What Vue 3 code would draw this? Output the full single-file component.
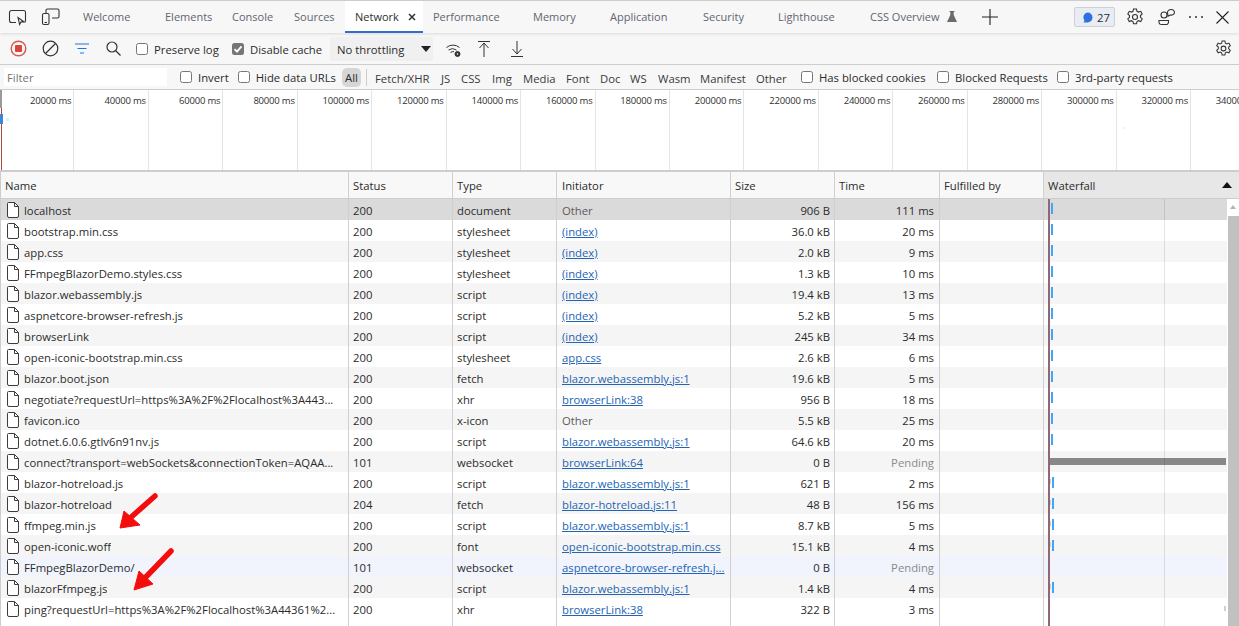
<script setup>
const tabs = [
  { name: 'Welcome', w: 82 }, { name: 'Elements', w: 67 }, { name: 'Console', w: 62 },
  { name: 'Sources', w: 61 }, { name: 'Network', w: 78, active: true }, { name: 'Performance', w: 100 },
  { name: 'Memory', w: 77 }, { name: 'Application', w: 93 }, { name: 'Security', w: 75 },
  { name: 'Lighthouse', w: 92 }, { name: 'CSS Overview', w: 85, flask: true },
]
const types = [
  { name: 'Fetch/XHR', w: 66 }, { name: 'JS', w: 20 }, { name: 'CSS', w: 31 }, { name: 'Img', w: 31 },
  { name: 'Media', w: 43 }, { name: 'Font', w: 34 }, { name: 'Doc', w: 30 }, { name: 'WS', w: 28 },
  { name: 'Wasm', w: 42 }, { name: 'Manifest', w: 56 }, { name: 'Other', w: 45 },
]
const ticks = Array.from({ length: 17 }, (_, i) => `${(i + 1) * 20000} ms`)
const rows = [
  ['localhost', '200', 'document', 'Other', '906 B', '111 ms', 'a'],
  ['bootstrap.min.css', '200', 'stylesheet', '(index)', '36.0 kB', '20 ms', 'a'],
  ['app.css', '200', 'stylesheet', '(index)', '2.0 kB', '9 ms', 'a'],
  ['FFmpegBlazorDemo.styles.css', '200', 'stylesheet', '(index)', '1.3 kB', '10 ms', 'a'],
  ['blazor.webassembly.js', '200', 'script', '(index)', '19.4 kB', '13 ms', 'a'],
  ['aspnetcore-browser-refresh.js', '200', 'script', '(index)', '5.2 kB', '5 ms', 'a'],
  ['browserLink', '200', 'script', '(index)', '245 kB', '34 ms', 'a'],
  ['open-iconic-bootstrap.min.css', '200', 'stylesheet', 'app.css', '2.6 kB', '6 ms', 'a'],
  ['blazor.boot.json', '200', 'fetch', 'blazor.webassembly.js:1', '19.6 kB', '5 ms', 'a'],
  ['negotiate?requestUrl=https%3A%2F%2Flocalhost%3A443...', '200', 'xhr', 'browserLink:38', '956 B', '18 ms', 'a'],
  ['favicon.ico', '200', 'x-icon', 'Other', '5.5 kB', '25 ms', 'a'],
  ['dotnet.6.0.6.gtlv6n91nv.js', '200', 'script', 'blazor.webassembly.js:1', '64.6 kB', '20 ms', 'a'],
  ['connect?transport=webSockets&connectionToken=AQAA...', '101', 'websocket', 'browserLink:64', '0 B', 'Pending', 'long'],
  ['blazor-hotreload.js', '200', 'script', 'blazor.webassembly.js:1', '621 B', '2 ms', 'b'],
  ['blazor-hotreload', '204', 'fetch', 'blazor-hotreload.js:11', '48 B', '156 ms', 'b'],
  ['ffmpeg.min.js', '200', 'script', 'blazor.webassembly.js:1', '8.7 kB', '5 ms', 'b'],
  ['open-iconic.woff', '200', 'font', 'open-iconic-bootstrap.min.css', '15.1 kB', '4 ms', 'b'],
  ['FFmpegBlazorDemo/', '101', 'websocket', 'aspnetcore-browser-refresh.j...', '0 B', 'Pending', ''],
  ['blazorFfmpeg.js', '200', 'script', 'blazor.webassembly.js:1', '1.4 kB', '4 ms', 'b'],
  ['ping?requestUrl=https%3A%2F%2Flocalhost%3A44361%2...', '200', 'xhr', 'browserLink:38', '322 B', '3 ms', 'end'],
].map(([name, status, type, initiator, size, time, bar]) => ({ name, status, type, initiator, size, time, bar }))
const rowClass = (i) => ({ sel: i === 0, ws: i === 17, alt: i % 2 === 0 && i !== 0 && i !== 17 })
</script>

<template>
  <div class="devtools">
    <div class="tabbar">
      <svg class="ic first" width="20" height="18" viewBox="0 0 20 18" fill="none" stroke="#333" stroke-width="1.1">
        <path d="M8 14.500H3.500a2 2 0 0 1-2-2v-8a2 2 0 0 1 2-2h12a2 2 0 0 1 2 2v8a2 2 0 0 1-.6 1.400" />
        <path d="M10 9.500l1.600 7 1.500-2.600 3 .1z" />
      </svg>
      <svg class="ic second" width="20" height="18" viewBox="0 0 20 18" fill="none" stroke="#333" stroke-width="1.1">
        <path d="M5 5V2.500a1.500 1.500 0 0 1 1.500-1.500h10a1.500 1.500 0 0 1 1.500 1.500v6a1.500 1.500 0 0 1-1.500 1.500H11" />
        <rect x="1.500" y="5.500" width="6.500" height="11" rx="1.500" />
        <path d="M3.500 14.500h2.500" />
      </svg>
      <div class="tabs">
        <div v-for="t in tabs" :key="t.name" class="tab" :class="{ active: t.active }" :style="{ width: t.w + 'px' }">
          {{ t.name }}
          <svg v-if="t.flask" class="flask" width="10" height="11" viewBox="0 0 10 11"><path fill="#6b6b6b" d="M2.500 0h5v1H6.700v3L10 11H0l3.300-7V1H2.500z" /></svg>
          <svg v-if="t.active" class="tabx" width="8" height="8" viewBox="0 0 8 8"><path d="M1 1l6 6M7 1L1 7" stroke="#333" stroke-width="1.500" /></svg>
        </div>
      </div>
      <svg class="plus" width="16" height="16" viewBox="0 0 16 16"><path d="M8 0v16M0 8h16" stroke="#222" stroke-width="1.100" /></svg>
      <div class="badge">
        <svg width="11" height="11" viewBox="0 0 11 11"><path fill="#2f6fe0" d="M5.500.500a5 5 0 0 1 5 5 5 5 0 0 1-5 5H1.500l1-1.800A5 5 0 0 1 5.500.500z" /></svg>
        <span>27</span>
      </div>
      <svg class="ic gear1" width="18" height="18" viewBox="0 0 18 18" fill="none" stroke="#333" stroke-width="1.100">
        <circle cx="9" cy="9" r="2.500" />
        <path d="M7.500 1h3l.5 2.300 1.500.8 2.200-.8 1.500 2.600-1.700 1.600v1.800l1.700 1.600-1.500 2.600-2.200-.8-1.500.8-.5 2.300h-3l-.5-2.300-1.500-.8-2.200.8-1.500-2.600 1.700-1.600V7.500L1.800 5.900l1.500-2.600 2.200.8L7 3.300z" />
      </svg>
      <svg class="ic people" width="18" height="18" viewBox="0 0 18 18" fill="none" stroke="#333" stroke-width="1.100">
        <circle cx="6" cy="7" r="3" />
        <path d="M1 12.500h9.500v1.500a2.500 2.500 0 0 1-2.500 2.500H3.500A2.500 2.500 0 0 1 1 14z" />
        <path d="M9.500 4.500a3.500 2.800 0 1 1 2.500 2.500l-2 1.300z" />
      </svg>
      <div class="dots"><i></i><i></i><i></i></div>
      <svg class="ic closex" width="13" height="13" viewBox="0 0 13 13"><path d="M.5.500l12 12M12.500.500l-12 12" stroke="#222" stroke-width="1.100" /></svg>
    </div>

    <div class="toolbar">
      <svg class="t-rec" width="17" height="17" viewBox="0 0 17 17"><circle cx="8.500" cy="8.500" r="7.300" fill="none" stroke="#d9574a" stroke-width="1.400" /><rect x="5" y="5" width="7" height="7" rx="1" fill="#d9473a" /></svg>
      <svg class="t-clear" width="17" height="17" viewBox="0 0 17 17" fill="none" stroke="#333" stroke-width="1.200"><circle cx="8.500" cy="8.500" r="7.300" /><path d="M3.500 13.500l10-10" /></svg>
      <svg class="t-filter" width="14" height="11" viewBox="0 0 14 11" stroke="#1a73e8" stroke-width="1.100"><path d="M0 1h14M2.500 5.500h9M5 10h4" /></svg>
      <svg class="t-search" width="15" height="15" viewBox="0 0 15 15" fill="none" stroke="#333" stroke-width="1.200"><circle cx="6" cy="6" r="5" /><path d="M9.500 9.500l5 5" /></svg>
      <label class="check t-preserve"><span class="box"></span><span class="lbl">Preserve log</span></label>
      <label class="check t-disable">
        <span class="box on"><svg width="12" height="12" viewBox="0 0 12 12"><path d="M2.500 6.200l2.500 2.500 4.500-5.400" fill="none" stroke="#fff" stroke-width="1.800" /></svg></span><span class="lbl">Disable cache</span>
      </label>
      <div class="throttle">No throttling<i class="tri"></i></div>
      <svg class="t-wifi" width="16" height="15" viewBox="0 0 16 15" fill="none" stroke="#333" stroke-width="1"><path d="M.500 4.500a10 10 0 0 1 13 0M2.500 7a7 7 0 0 1 8 0M4.500 9.500a4 4 0 0 1 3.500-.8" /><circle cx="11.500" cy="11" r="2.500" fill="#333" stroke="#333" /><circle cx="11.500" cy="11" r=".8" fill="#fff" stroke="none" /></svg>
      <svg class="t-up" width="12" height="16" viewBox="0 0 12 16" fill="none" stroke="#333" stroke-width="1"><path d="M0 .500h12M6 16V2M1.500 7L6 2l4.500 5" /></svg>
      <svg class="t-down" width="12" height="16" viewBox="0 0 12 16" fill="none" stroke="#333" stroke-width="1"><path d="M0 15.500h12M6 0v13M1.500 8L6 13l4.500-5" /></svg>
      <svg class="t-gear" width="17" height="17" viewBox="0 0 18 18" fill="none" stroke="#333" stroke-width="1.100">
        <circle cx="9" cy="9" r="2.500" />
        <path d="M7.500 1h3l.5 2.300 1.500.8 2.200-.8 1.500 2.600-1.700 1.600v1.800l1.700 1.600-1.500 2.600-2.200-.8-1.500.8-.5 2.300h-3l-.5-2.300-1.500-.8-2.200.8-1.500-2.600 1.700-1.600V7.500L1.800 5.900l1.500-2.600 2.200.8L7 3.300z" />
      </svg>
    </div>

    <div class="filterbar">
      <div class="filter-input">Filter</div>
      <label class="check f-invert"><span class="box"></span><span class="lbl">Invert</span></label>
      <label class="check f-hide"><span class="box"></span><span class="lbl">Hide data URLs</span></label>
      <span class="all">All</span>
      <span class="sep"></span>
      <span v-for="t in types" :key="t.name" class="type" :style="{ width: t.w + 'px' }">{{ t.name }}</span>
      <label class="check f-cookies"><span class="box"></span><span class="lbl">Has blocked cookies</span></label>
      <label class="check f-blocked"><span class="box"></span><span class="lbl">Blocked Requests</span></label>
      <label class="check f-third"><span class="box"></span><span class="lbl">3rd-party requests</span></label>
    </div>

    <div class="overview">
      <div v-for="t in ticks" :key="t" class="tick">{{ t }}</div>
      <i class="ov-grey"></i><i class="ov-red"></i><i class="ov-blue"></i><i class="ov-light"></i><i class="ov-dot"></i>
    </div>

    <div class="table">
      <div class="row head">
        <div class="c name">Name</div><div class="c status">Status</div><div class="c type-c">Type</div>
        <div class="c init">Initiator</div><div class="c size">Size</div><div class="c time">Time</div>
        <div class="c ful">Fulfilled by</div>
        <div class="c wf">Waterfall<i class="sort"></i></div>
      </div>
      <div v-for="(r, i) in rows" :key="r.name" class="row" :class="rowClass(i)">
        <div class="c name">
          <svg class="file" width="12" height="16" viewBox="0 0 12 16"><path d="M1.500.500h6l4 4v9.500a1.500 1.500 0 0 1-1.500 1.500H2a1.500 1.500 0 0 1-1.500-1.500V1.500a1 1 0 0 1 1-1z" fill="#fff" stroke="#3c3c3c" /><path d="M7.500.500v4h4" fill="none" stroke="#3c3c3c" /></svg>
          <span class="fname">{{ r.name }}</span>
        </div>
        <div class="c status">{{ r.status }}</div>
        <div class="c type-c">{{ r.type }}</div>
        <div class="c init"><span v-if="r.initiator === 'Other'" class="muted">Other</span><a v-else class="link">{{ r.initiator }}</a></div>
        <div class="c size">{{ r.size }}</div>
        <div class="c time" :class="{ pending: r.time === 'Pending' }">{{ r.time }}</div>
        <div class="c ful"></div>
        <div class="c wf">
          <template v-if="r.bar === 'a'"><i class="bar"></i></template>
          <template v-else-if="r.bar === 'b'"><i class="wait"></i><i class="bar late"></i></template>
          <i v-else-if="r.bar === 'long'" class="longbar"></i>
          <i v-else-if="r.bar === 'end'" class="endbar"></i>
        </div>
      </div>
      <div class="row filler">
        <div class="c name"></div><div class="c status"></div><div class="c type-c"></div><div class="c init"></div>
        <div class="c size"></div><div class="c time"></div><div class="c ful"></div><div class="c wf"></div>
      </div>
      <i class="gridline"></i>
      <i class="loadline"></i>
      <div class="scrollbar"><i class="up"></i><i class="thumb"></i></div>
    </div>

    <svg class="arrows" width="1239" height="626" viewBox="0 0 1239 626">
      <path d="M155 496L129 519" stroke="#f50d0d" stroke-width="5.500" stroke-linecap="round" />
      <path d="M120 528L124 511L140 525z" fill="#f50d0d" stroke="#f50d0d" stroke-linejoin="round" />
      <path d="M171 551L143 580" stroke="#f50d0d" stroke-width="5.500" stroke-linecap="round" />
      <path d="M134 590L139 571L153 584z" fill="#f50d0d" stroke="#f50d0d" stroke-linejoin="round" />
    </svg>
  </div>
</template>

<style>
html, body { margin: 0; background: #fff; }
</style>

<style scoped>
.devtools {
  position: relative; width: 1239px; height: 626px; overflow: hidden; display: flex; flex-direction: column;
  font-family: "Open Sans", "Noto Sans", sans-serif; font-size: 11.300px; color: #2b2b2b; background: #fff;
}
svg { display: block; flex: none; }
.tabbar {
  height: 33px; box-sizing: border-box; flex: none; display: flex; align-items: center; background: #f7f7f7;
  border-top: 1px solid #cdcdcd; position: relative; z-index: 1; box-shadow: 0 1px 3px rgba(0, 0, 0, .12);
}
.first { margin-left: 8px; }
.second { margin-left: 13px; }
.tabs { display: flex; height: 100%; margin-left: 12px; }
.tab { box-sizing: border-box; padding: 8px 0 0 10px; color: #5f6670; white-space: nowrap; position: relative; font-size: 11px; }
.tab.active { background: #fff; color: #303030; border-bottom: 2px solid #2f6fce; }
.flask { position: absolute; left: 87px; top: 10px; }
.tabx { position: absolute; left: 63px; top: 12px; }
.plus { margin-left: 37px; }
.badge {
  margin-left: 76px; width: 41px; height: 20px; box-sizing: border-box; border: 1px solid #d0d0d0; border-radius: 2px;
  background: #e8edf5; display: flex; align-items: center; gap: 4px; padding-left: 7px;
}
.gear1 { margin-left: 11px; }
.people { margin-left: 14px; }
.dots { display: flex; gap: 4px; margin-left: 13px; }
.dots i { width: 2px; height: 2px; background: #333; border-radius: 50%; }
.closex { margin-left: 13px; }

.toolbar { height: 31px; flex: none; display: flex; align-items: center; background: #f7f7f7; border-bottom: 1px solid #cdcdcd; }
.t-rec { margin-left: 10px; }
.t-clear { margin-left: 15px; }
.t-filter { margin-left: 16px; }
.t-search { margin-left: 17px; }
.check { display: flex; align-items: center; white-space: nowrap; }
.lbl { padding-top: 1px; }
.box { width: 10px; height: 10px; border: 1px solid #767676; border-radius: 2.500px; background: #fff; margin-right: 6px; flex: none; display: block; }
.box.on { background: #767676; width: 12px; height: 12px; border: 0; }
.t-preserve { margin-left: 15px; }
.t-disable { position: absolute; left: 232px; }
.throttle {
  position: absolute; left: 330px; top: 37px; width: 103px; height: 24px; box-sizing: border-box; padding: 5px 0 0 7px;
  background: #f0f0f0; border-radius: 2px;
}
.tri { position: absolute; left: 91px; top: 9px; border: 5px solid transparent; border-top: 6px solid #222; border-bottom: 0; }
.t-wifi { position: absolute; left: 446px; top: 43px; }
.t-up { position: absolute; left: 478px; top: 41px; }
.t-down { position: absolute; left: 511px; top: 41px; }
.t-gear { margin-left: auto; margin-right: 7px; }

.filterbar { height: 24px; flex: none; display: flex; align-items: center; background: #f7f7f7; border-bottom: 1px solid #cdcdcd; }
.filter-input { margin-left: 4px; width: 160px; height: 18px; padding-left: 3px; background: #fff; color: #757575; line-height: 20px; }
.type { padding-top: 2px; }
.f-invert { margin-left: 13px; }
.f-hide { margin-left: 9px; }
.all { margin-left: 6px; width: 19px; height: 19px; border-radius: 5px; background: #d6d6d6; text-align: center; line-height: 20px; }
.sep { width: 1px; height: 17px; background: #ccc; margin: 0 8px 0 5px; }
.type { white-space: nowrap; color: #3a3a3a; }
.f-cookies { position: absolute; left: 801px; }
.f-blocked { position: absolute; left: 937px; }
.f-third { position: absolute; left: 1057px; }

.overview { height: 80px; flex: none; display: flex; position: relative; overflow: hidden; background: #fff; border-bottom: 2px solid #cdcdcd; }
.tick {
  width: 74.450px; flex: none; box-sizing: border-box; border-right: 1.500px solid #e4e4e4; text-align: right;
  padding: 4px 2px 0 0; white-space: nowrap; font-size: 9.500px; letter-spacing: -.2px; color: #303030;
}
.ov-grey { position: absolute; left: 0; top: 0; width: 2px; height: 18px; background: #9a9a9a; }
.ov-red { position: absolute; left: 1px; top: 18px; width: 1px; height: 62px; background: #b5483c; }
.ov-blue { position: absolute; left: 0; top: 24px; width: 3px; height: 10px; background: #3c86dc; }
.ov-light { position: absolute; left: 6px; top: 28px; width: 3px; height: 3px; background: #dceefc; }
.ov-dot { position: absolute; left: 1123px; top: 37px; width: 1px; height: 2px; background: #d8e6f2; }

.table { flex: 1; display: flex; flex-direction: column; position: relative; border-left: 1px solid #cdcdcd; min-height: 0; }
.row { display: flex; height: 21px; flex: none; background: #fff; }
.row.head { height: 27px; box-sizing: border-box; background: #f8f8f8; border-bottom: 1px solid #cdcdcd; }
.row.alt { background: #f5f5f5; }
.row.sel { background: #dadada; }
.row.ws { background: #f1f4fd; }
.row.filler { flex: 1; height: auto; }
.c { box-sizing: border-box; border-right: 1px solid #d0d0d0; flex: none; padding: 0 3px 0 3px; line-height: 23px; white-space: nowrap; overflow: hidden; position: relative; }
.head .c { line-height: 27px; }
.name { width: 348px; display: flex; align-items: center; padding-left: 4px; }
.head .name { padding-left: 4px; }
.file { margin: 0 5px 0 2px; }
.fname { overflow: hidden; padding-top: 1px; }
.status { width: 104px; padding-left: 4px; }
.type-c { width: 104px; padding-left: 4px; }
.init { width: 174px; padding-left: 5px; }
.size { width: 104px; text-align: right; padding-right: 4px; }
.time { width: 105px; text-align: right; padding-right: 5px; }
.head .size, .head .time { text-align: left; padding-left: 4px; }
.pending { color: #8a8a8a; }
.ful { width: 104px; padding-left: 4px; }
.wf { width: 183px; border-right: 0; padding-left: 4px; overflow: visible; }
.head .wf { background: #e7e7e7; width: 195px; }
.sort { position: absolute; left: 178px; top: 10px; border: 5px solid transparent; border-bottom: 6px solid #111; border-top: 0; }
.muted { color: #5c5c5c; }
.link { color: #2464b4; text-decoration: underline; }
.bar { position: absolute; left: 7px; top: 4px; width: 2px; height: 11px; background: #42a5f5; }
.bar.late { left: 8px; top: 5px; }
.wait { position: absolute; left: 5px; top: 7px; width: 2px; height: 5px; background: #cfcfcf; }
.longbar { position: absolute; left: 5px; top: 7px; width: 177px; height: 7px; background: #888; }
.endbar { position: absolute; left: 180px; top: 8px; width: 2px; height: 5px; background: #d0d0d0; }
.gridline { position: absolute; left: 1163px; top: 27px; bottom: 0; width: 1px; background: rgba(0, 0, 0, .1); }
.loadline { position: absolute; left: 1047px; top: 27px; bottom: 0; width: 2px; background: #8f6878; }
.scrollbar { position: absolute; left: 1226px; top: 27px; bottom: 0; width: 12px; background: #fff; }
.up { position: absolute; left: 3px; top: 6px; border: 3.500px solid transparent; border-bottom: 4px solid #b4b4b4; border-top: 0; }
.thumb { position: absolute; left: 1px; right: 0; top: 17px; bottom: 0; background: #c1c1c1; }
.arrows { position: absolute; left: 0; top: 0; pointer-events: none; }
</style>
